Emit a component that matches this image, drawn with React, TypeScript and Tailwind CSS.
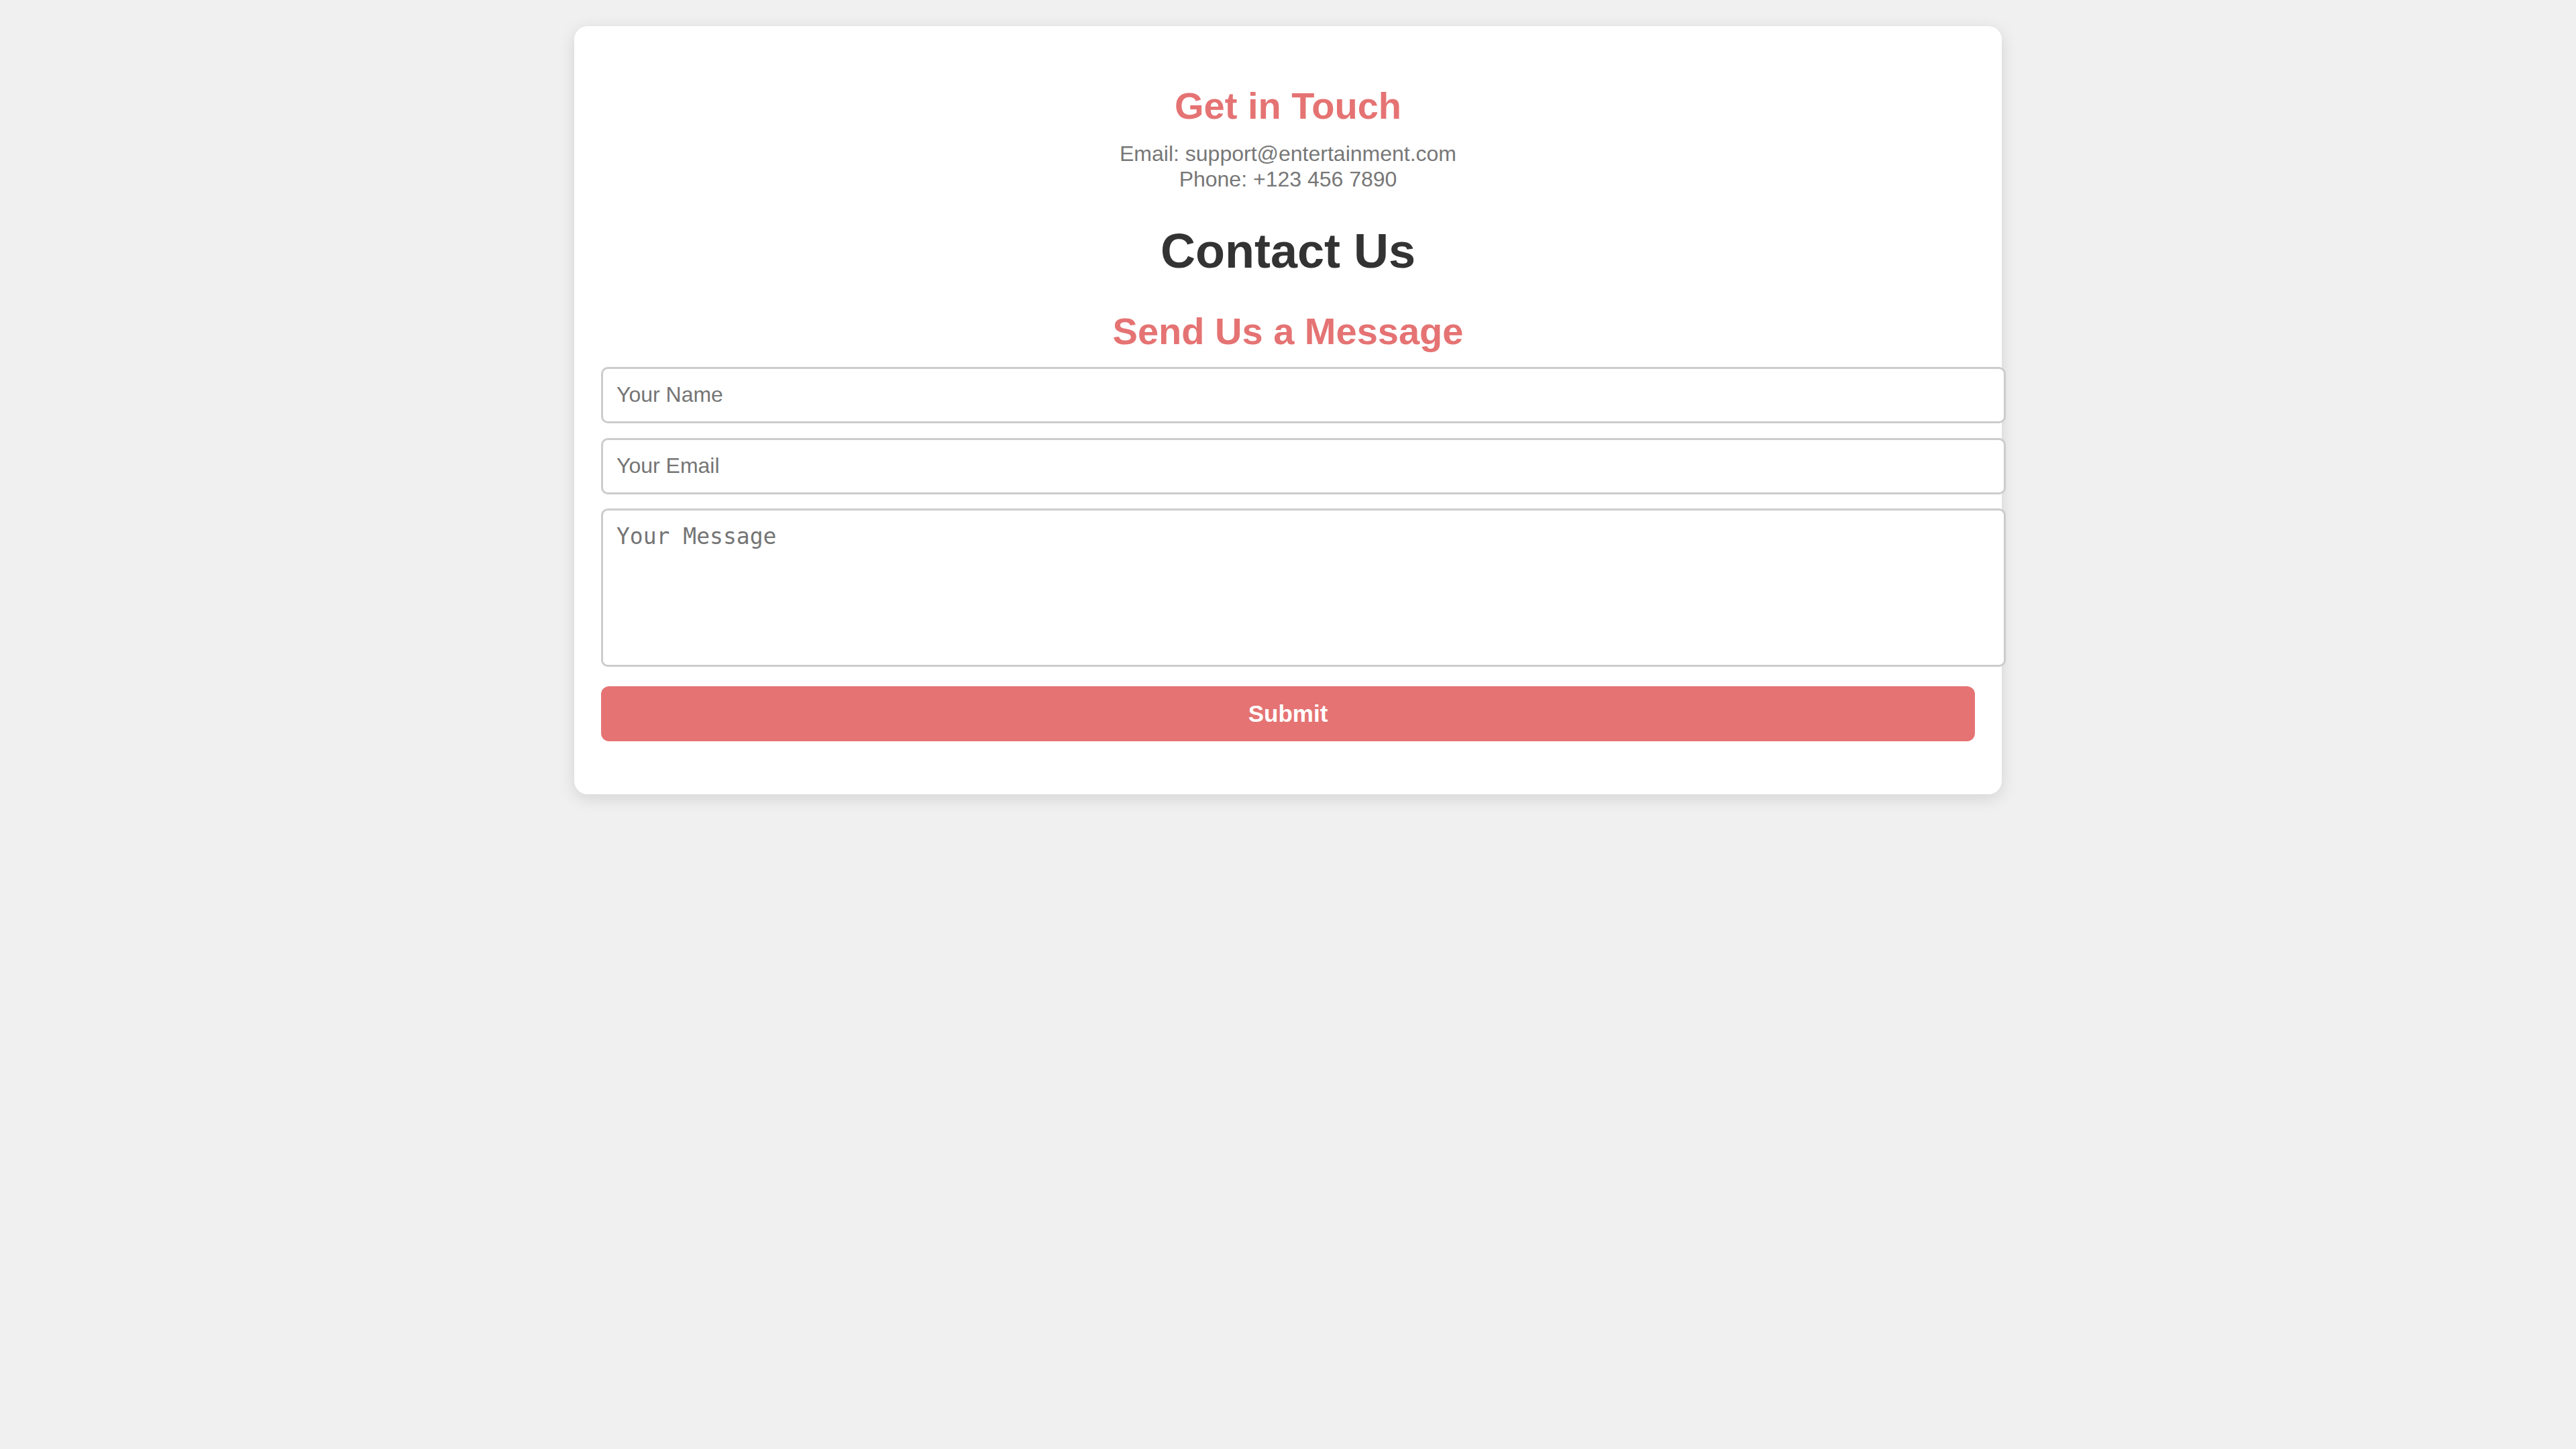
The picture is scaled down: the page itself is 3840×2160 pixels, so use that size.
import React from 'react';

const ContactCard: React.FC = () => {
  return (
    <div className="mx-auto mt-[38px] w-[2128px] rounded-[20px] bg-white px-[40px] pb-[79px] pt-[40px] shadow-[0_6px_24px_rgba(0,0,0,0.12)]">
      {/* info block */}
      <h2 className="mt-[47px] text-center text-[56px] font-bold leading-[63px] text-[#e57373]">Get in Touch</h2>
      <p className="mt-[21px] text-center text-[32px] leading-[38px] text-[#777777]">
        Email: support@entertainment.com
        <br />
        Phone: +123 456 7890
      </p>

      <h1 className="mt-[47px] text-center text-[72px] font-bold leading-[82px] text-[#333333]">Contact Us</h1>

      <h2 className="mt-[47px] text-center text-[56px] font-bold leading-[64px] text-[#e57373]">Send Us a Message</h2>

      <form className="flex flex-col" onSubmit={(e) => e.preventDefault()}>
        <input
          type="text"
          placeholder="Your Name"
          className="mt-[21px] box-content block h-[37px] w-full rounded-[10px] border-[3px] border-[#cccccc] bg-white px-[20px] pb-[21px] pt-[20px] font-['Liberation_Sans',Arial,sans-serif] text-[32px] leading-[37px] text-[#333] outline-none placeholder:text-[#757575]"
        />
        <input
          type="email"
          placeholder="Your Email"
          className="mt-[22px] box-content block h-[37px] w-full rounded-[10px] border-[3px] border-[#cccccc] bg-white px-[20px] pb-[21px] pt-[20px] font-['Liberation_Sans',Arial,sans-serif] text-[32px] leading-[37px] text-[#333] outline-none placeholder:text-[#757575]"
        />
        <textarea
          placeholder="Your Message"
          className="mt-[21px] box-content block h-[190px] w-full resize-none rounded-[10px] border-[3px] border-[#cccccc] bg-white px-[20px] py-[20px] font-['DejaVu_Sans_Mono',monospace] text-[33px] leading-[38px] text-[#333] outline-none placeholder:text-[#757575]"
        />
        <button
          type="submit"
          className="mt-[29px] h-[82px] w-full rounded-[12px] bg-[#e57373] text-[35px] font-bold text-white"
        >
          Submit
        </button>
      </form>
    </div>
  );
};

export default function App() {
  return (
    <div className="min-h-[2160px] w-full overflow-hidden bg-[#f0f0f0] pt-px font-['Liberation_Sans',Arial,sans-serif]">
      <ContactCard />
    </div>
  );
}
